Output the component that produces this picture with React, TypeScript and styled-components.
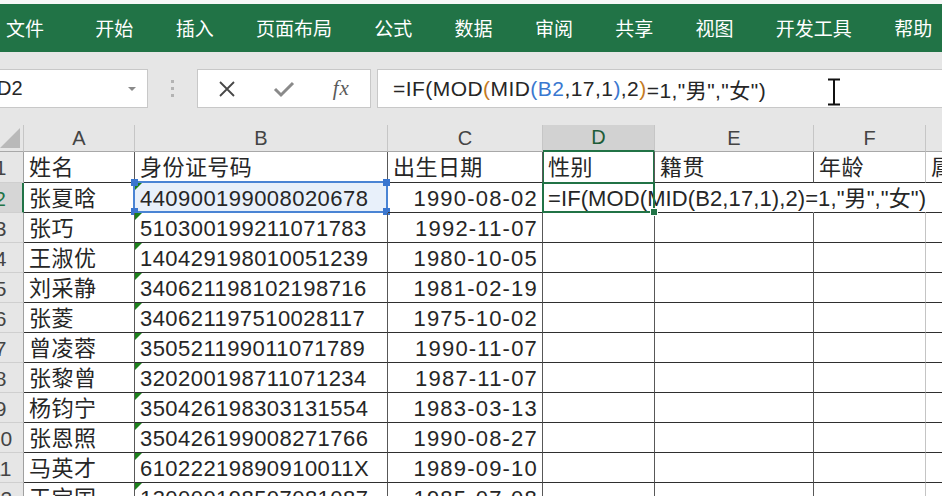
import React from 'react'
import styled, { createGlobalStyle } from 'styled-components'

const GREEN = '#217346'

const tabs = ['文件', '开始', '插入', '页面布局', '公式', '数据', '审阅', '共享', '视图', '开发工具', '帮助']

const columns = [
  { key: 'A', width: 111 },
  { key: 'B', width: 253 },
  { key: 'C', width: 155 },
  { key: 'D', width: 112 },
  { key: 'E', width: 159 },
  { key: 'F', width: 112 },
  { key: 'G', width: 140 }
]

const titles = ['姓名', '身份证号码', '出生日期', '性别', '籍贯', '年龄', '属相']

const people = [
  ['张夏晗', '440900199008020678', '1990-08-02'],
  ['张巧', '510300199211071783', '1992-11-07'],
  ['王淑优', '140429198010051239', '1980-10-05'],
  ['刘采静', '340621198102198716', '1981-02-19'],
  ['张菱', '340621197510028117', '1975-10-02'],
  ['曾凌蓉', '350521199011071789', '1990-11-07'],
  ['张黎曾', '320200198711071234', '1987-11-07'],
  ['杨钧宁', '350426198303131554', '1983-03-13'],
  ['张恩照', '350426199008271766', '1990-08-27'],
  ['马英才', '61022219890910011X', '1989-09-10'],
  ['王宝国', '130000198507081087', '1985-07-08']
]

const formula = [
  { t: '=IF(MOD' },
  { t: '(', c: '#c47a24' },
  { t: 'MID' },
  { t: '(', c: '#3a78d0' },
  { t: 'B2', c: '#3a78d0' },
  { t: ',17,1' },
  { t: ')', c: '#3a78d0' },
  { t: ',2' },
  { t: ')', c: '#c47a24' },
  { t: '=1,"男","女")' }
]

const App = () => {
  return (
    <Window>
      <GlobalStyle />
      <TopStrip />
      <Ribbon>
        {tabs.map((tab, i) => (
          <Tab key={tab} $first={i === 0}>
            {tab}
          </Tab>
        ))}
      </Ribbon>

      <FormulaArea>
        <NameBox>
          <span>D2</span>
          <svg width="10" height="6" viewBox="0 0 10 6">
            <path d="M1 1 L5 5 L9 1 Z" fill="#8a8a8a" />
          </svg>
        </NameBox>
        <Grip>
          <Dot />
          <Dot />
          <Dot />
        </Grip>
        <ButtonBox>
          <IconSlot>
            <svg width="18" height="18" viewBox="0 0 18 18">
              <path d="M2 2 L16 16 M16 2 L2 16" stroke="#474747" strokeWidth="1.8" fill="none" />
            </svg>
          </IconSlot>
          <IconSlot>
            <svg width="22" height="18" viewBox="0 0 22 18">
              <path d="M2 9 L8 15 L20 3" stroke="#8a8a8a" strokeWidth="3" fill="none" />
            </svg>
          </IconSlot>
          <IconSlot>
            <Fx>fx</Fx>
          </IconSlot>
        </ButtonBox>
        <FormulaInput>
          {formula.map((tok, i) => (
            <Tok key={i} $c={tok.c}>
              {tok.t}
            </Tok>
          ))}
          <Cursor width="14" height="28" viewBox="0 0 14 28">
            <path d="M1 1.5 H13 M7 1.5 V26.5 M1 26.5 H13" stroke="#111" strokeWidth="2" fill="none" />
          </Cursor>
        </FormulaInput>
      </FormulaArea>

      <Sheet>
        <Corner>
          <svg width="20" height="20" viewBox="0 0 20 20">
            <path d="M20 0 L20 20 L0 20 Z" fill="#b9b9b9" />
          </svg>
        </Corner>
        {columns.map((col) => (
          <ColHead key={col.key} $active={col.key === 'D'}>
            {col.key === 'G' ? '' : col.key}
          </ColHead>
        ))}

        <RowHead>1</RowHead>
        {titles.map((title, i) => (
          <Cell key={title} $edge={i === 5} $frame={i === 3}>
            {title}
          </Cell>
        ))}

        {people.map((p, r) => {
          const row = r + 2
          const active = row === 2
          return (
            <React.Fragment key={row}>
              <RowHead $active={active}>{row}</RowHead>
              <Cell>{p[0]}</Cell>
              <Cell $sel={active}>
                <Flag />
                {p[1]}
                {active && (
                  <RefBox>
                    <Handle style={{ left: -4, top: -4 }} />
                    <Handle style={{ right: -4, top: -4 }} />
                    <Handle style={{ left: -4, bottom: -4 }} />
                    <Handle style={{ right: -4, bottom: -4 }} />
                  </RefBox>
                )}
              </Cell>
              <Cell $align="right" $wide>
                {p[2]}
              </Cell>
              <Cell $active={active}>
                {active && (
                  <>
                    <Spill>=IF(MOD(MID(B2,17,1),2)=1,"男","女")</Spill>
                    <ActiveBox>
                      <FillHandle />
                    </ActiveBox>
                  </>
                )}
              </Cell>
              <Cell $open={active} />
              <Cell $open={active} $edge />
              <Cell />
            </React.Fragment>
          )
        })}
      </Sheet>
    </Window>
  )
}

const GlobalStyle = createGlobalStyle`
  html, body {
    margin: 0;
    padding: 0;
    background: #fff;
    overflow: hidden;
  }
  body {
    font-family: 'Liberation Sans', 'Noto Sans CJK SC', sans-serif;
  }
`

const Window = styled.div`
  width: 942px;
  height: 496px;
  overflow: hidden;
  display: flex;
  flex-direction: column;
  background: #fff;
`

const TopStrip = styled.div`
  flex: none;
  height: 4px;
  background: #f7f7f7;
`

const Ribbon = styled.div`
  flex: none;
  height: 48px;
  display: flex;
  align-items: center;
  gap: 42.3px;
  padding-left: 6px;
  background: ${GREEN};
`

const Tab = styled.div<{ $first?: boolean }>`
  margin-right: ${(p) => (p.$first ? '9px' : '0')};
  color: #fff;
  font-family: 'Noto Sans CJK SC', sans-serif;
  font-size: 19px;
  line-height: 24px;
  white-space: nowrap;
`

const FormulaArea = styled.div`
  flex: none;
  height: 73px;
  box-sizing: border-box;
  padding-top: 17px;
  display: flex;
  align-items: flex-start;
  background: #e6e6e6;
`

const NameBox = styled.div`
  flex: none;
  width: 168px;
  height: 39px;
  margin-left: -20px;
  box-sizing: border-box;
  padding: 0 10px 0 16px;
  display: flex;
  align-items: center;
  justify-content: space-between;
  background: #fff;
  border: 1px solid #c8c8c8;
  font-size: 20px;
  color: #262626;
`

const Grip = styled.div`
  flex: none;
  width: 49px;
  height: 39px;
  display: flex;
  flex-direction: column;
  align-items: center;
  justify-content: center;
  gap: 4px;
`

const Dot = styled.div`
  width: 3px;
  height: 3px;
  background: #b3b3b3;
`

const ButtonBox = styled.div`
  flex: none;
  width: 174px;
  height: 39px;
  box-sizing: border-box;
  display: flex;
  background: #fff;
  border: 1px solid #c8c8c8;
`

const IconSlot = styled.div`
  flex: 1;
  display: flex;
  align-items: center;
  justify-content: center;
`

const Fx = styled.span`
  font-family: 'Liberation Serif', serif;
  font-style: italic;
  font-size: 21px;
  color: #5a5a5a;
  letter-spacing: 1px;
`

const FormulaInput = styled.div`
  position: relative;
  flex: 1;
  height: 39px;
  margin-left: 6px;
  margin-right: -2px;
  box-sizing: border-box;
  padding-left: 15px;
  display: flex;
  align-items: center;
  background: #fff;
  border: 1px solid #c8c8c8;
  font-size: 21px;
  letter-spacing: 0.45px;
  color: #262626;
  white-space: nowrap;
`

const Tok = styled.span<{ $c?: string }>`
  color: ${(p) => p.$c || '#262626'};
`

const Cursor = styled.svg`
  position: absolute;
  left: 449px;
  top: 8px;
`

const Sheet = styled.div`
  flex: none;
  margin-left: -22px;
  display: grid;
  grid-template-columns: 46px ${columns.map((c) => `${c.width}px`).join(' ')};
  grid-template-rows: 27px 31px;
  grid-auto-rows: 30px;
  background: #fff;
`

const Corner = styled.div`
  display: flex;
  align-items: flex-end;
  justify-content: flex-end;
  padding: 0 3px 3px 0;
  background: #e6e6e6;
  border-right: 1px solid #c6c6c6;
  border-bottom: 1px solid #a8a8a8;
`

const ColHead = styled.div<{ $active?: boolean }>`
  display: flex;
  align-items: center;
  justify-content: center;
  box-sizing: border-box;
  background: ${(p) => (p.$active ? '#d2d2d2' : '#e6e6e6')};
  border-right: 1px solid #c6c6c6;
  border-bottom: ${(p) => (p.$active ? `2px solid ${GREEN}` : '1px solid #a8a8a8')};
  color: ${(p) => (p.$active ? '#1d5c38' : '#444')};
  font-size: 20px;
`

const RowHead = styled.div<{ $active?: boolean }>`
  display: flex;
  align-items: center;
  justify-content: center;
  box-sizing: border-box;
  padding-top: 2px;
  background: ${(p) => (p.$active ? '#d6d6d6' : '#e6e6e6')};
  border-right: ${(p) => (p.$active ? `2px solid ${GREEN}` : '1px solid #a0a0a0')};
  border-bottom: 1px solid #cfcfcf;
  color: ${(p) => (p.$active ? GREEN : '#444')};
  font-size: 21px;
`

const Cell = styled.div<{
  $align?: 'left' | 'right'
  $edge?: boolean
  $open?: boolean
  $sel?: boolean
  $active?: boolean
  $frame?: boolean
  $wide?: boolean
}>`
  position: relative;
  z-index: ${(p) => (p.$active ? 2 : 'auto')};
  min-width: 0;
  box-sizing: border-box;
  padding: 2px 4px 0 5px;
  display: flex;
  align-items: center;
  justify-content: ${(p) => (p.$align === 'right' ? 'flex-end' : 'flex-start')};
  background: ${(p) => (p.$sel ? '#e8f0fa' : 'transparent')};
  border-bottom: 1px solid #2f2f2f;
  border-right: 1px solid ${(p) => (p.$open ? 'transparent' : p.$edge ? '#c4c4c4' : '#585858')};
  box-shadow: ${(p) => (p.$frame ? `inset 1px 0 0 ${GREEN}, inset -1px 0 0 ${GREEN}` : 'none')};
  font-size: 22px;
  letter-spacing: ${(p) => (p.$wide ? '1.2px' : '0.45px')};
  line-height: 26px;
  color: #262626;
  white-space: nowrap;
`

const Spill = styled.span`
  letter-spacing: 0.1px;
`

const Flag = styled.div`
  position: absolute;
  left: 0;
  top: 0;
  width: 0;
  height: 0;
  border-top: 7px solid #1a7f1a;
  border-right: 7px solid transparent;
`

const RefBox = styled.div`
  position: absolute;
  left: -2px;
  top: -2px;
  right: -1px;
  bottom: -1px;
  border: 2px solid #4a84d4;
  pointer-events: none;
`

const Handle = styled.div`
  position: absolute;
  width: 7px;
  height: 7px;
  background: #3a76cf;
`

const ActiveBox = styled.div`
  position: absolute;
  left: -1px;
  top: -1px;
  right: -1px;
  bottom: -1px;
  border: 2px solid ${GREEN};
`

const FillHandle = styled.div`
  position: absolute;
  right: -5px;
  bottom: -5px;
  width: 6px;
  height: 6px;
  background: ${GREEN};
  border: 1px solid #fff;
`

export default App
